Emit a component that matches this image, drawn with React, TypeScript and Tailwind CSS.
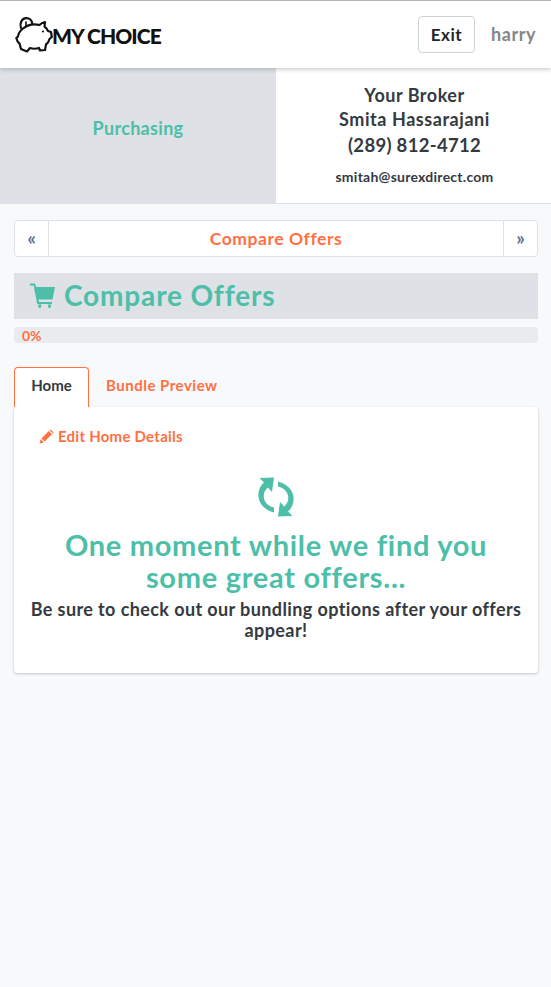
function PiggyLogo() {
  return (
    <svg width="38" height="37" viewBox="0 0 38 37" fill="none" stroke="#111" strokeWidth="2.2" strokeLinejoin="round" strokeLinecap="round">
      <path d="M8 12.5C5 15 3.2 18 3 20.5L1.3 22C2 25 3 26.5 4.5 27.5L6 33L12 35.5L15 32C18 33 21 33 24 32L25 34.5L30 34L31 28.5C33 27 34 25 34.5 23L36.8 21L36 16L33 15C32 13 31 11.5 29.5 10.5L30 6C28 6.5 26 7.5 24.5 9C19 7.5 13 8.5 8 12.5Z" />
      <path d="M6 12C4.3 7 7 2.4 11 2.2C14.5 2 17 4.2 17.3 7.8" />
      <path d="M11 6V9.5" strokeWidth="1.6" />
      <circle cx="28" cy="15.5" r="1.1" fill="#111" stroke="none" />
    </svg>
  );
}

function CartIcon() {
  return (
    <svg width="25" height="26" viewBox="0 0 25 26" fill="currentColor">
      <path d="M0 0.5H5L6 4H25L22.5 16.5H8.5L9 19H22V21H7.2L3.6 2.5H0Z" />
      <path d="M8 21.5H11.5L10.8 25H8.8Z" />
      <path d="M17.8 21.5H21.3L20.5 25H18.5Z" />
    </svg>
  );
}

function PencilIcon() {
  return (
    <svg width="15" height="15" viewBox="0 0 15 15" fill="currentColor">
      <path d="M0.5 14.5L1.6 10.2L4.8 13.4Z" />
      <path d="M2.4 9.4L9.8 2L13 5.2L5.6 12.6Z" />
      <path d="M10.6 1.2L11.6 0.4L14.6 3.4L13.8 4.4Z" />
    </svg>
  );
}

function RefreshIcon() {
  return (
    <svg width="38" height="40" viewBox="0 0 38 40" fill="#4dbfa8">
      <path d="M17 35.5C9 33.5 2.5 28 1.5 20C0.8 14 3.5 8.5 7 5.5L2.5 1L17 0.5L15 15L10.8 10.5C8 13 6.3 16.5 6.8 20.5C7.6 26 12 29.5 17 30.5Z" />
      <path d="M21 4.5C29 6.5 35.5 12 36.5 20C37.2 26 34.5 31.5 31 34.5L35.5 39L21 39.5L23 25L27.2 29.5C30 27 31.7 23.5 31.2 19.5C30.4 14 26 10.5 21 9.5Z" />
    </svg>
  );
}

export default function App() {
  return (
    <div className="min-h-[987px] bg-[#f8f9fb] font-['Lato','Liberation_Sans',sans-serif] text-[#343a40]">
      <header className="relative z-10 flex h-[68px] items-center justify-between border-t border-[#b5b5b5] bg-white pl-[15px] pr-[13px] shadow-[0_2px_4px_rgba(0,0,0,0.18)]">
        <div className="flex items-center">
          <PiggyLogo />
          <span className="-ml-[1px] mt-[1px] text-[21px] leading-none font-black tracking-[-0.95px] text-[#111]">MY CHOICE</span>
        </div>
        <div className="flex items-center">
          <button className="h-[37px] w-[57px] rounded-[4px] border border-[#ced4da] bg-white text-[17px] font-bold tracking-[0.5px] text-[#212529]">Exit</button>
          <span className="ml-4 w-[47px] text-[18px] font-bold tracking-[0.6px] text-[#868686]">harry</span>
        </div>
      </header>

      <section className="flex h-[136px] border-b border-[#dee2e6] bg-white">
        <div className="flex w-[276px] justify-center bg-[#dee1e6] pt-[47px] text-[18px] leading-[26px] font-bold tracking-[0.3px] text-[#4dbfa8]">Purchasing</div>
        <div className="flex flex-1 flex-col items-center pl-[2px] pt-[15px] font-bold">
          <p className="text-[18px] leading-[24px] tracking-[0.5px]">Your Broker</p>
          <p className="text-[18px] leading-[24px] tracking-[0.55px]">Smita Hassarajani</p>
          <p className="mt-[1px] text-[18.5px] leading-[26px] tracking-[0.3px]">(289) 812-4712</p>
          <p className="mt-[9px] text-[14px] leading-[20px] tracking-[0.25px]">smitah@surexdirect.com</p>
        </div>
      </section>

      <main className="pl-[14px] pr-[13px] pt-[16px]">
        <nav className="flex h-[37px] items-center rounded-[4px] border border-[#dee2e6] bg-white">
          <span className="flex h-full w-[34px] items-center justify-center border-r border-[#dee2e6] text-[19px] font-bold text-[#5a7391]">«</span>
          <span className="flex-1 pt-[1px] text-center text-[17.5px] font-bold tracking-[0.55px] text-[#ff7043]">Compare Offers</span>
          <span className="flex h-full w-[34px] items-center justify-center border-l border-[#dee2e6] text-[19px] font-bold text-[#5a7391]">»</span>
        </nav>

        <div className="mt-[16px] flex h-[46px] items-center bg-[#dee1e6] pl-[16px] text-[#4dbfa8]">
          <CartIcon />
          <h1 className="-mt-[2px] ml-[9px] text-[28px] leading-none font-bold tracking-[0.85px]">Compare Offers</h1>
        </div>

        <div className="mt-[8px] flex h-[16px] items-center rounded-[4px] bg-[#e9ecef] pl-[8px] text-[14px] font-bold text-[#ff7043]">0%</div>

        <div className="mt-[24px] flex h-[40px] items-stretch">
          <div className="relative z-10 flex h-[40px] w-[75px] items-center justify-center rounded-t-[4px] border border-b-0 border-[#ff7043] bg-white pb-[4px] text-[15px] font-bold text-[#343a40]">Home</div>
          <div className="ml-[17px] flex items-center pb-[3px] text-[15px] font-bold tracking-[0.5px] text-[#ff7043]">Bundle Preview</div>
        </div>

        <div className="h-[266px] rounded-[4px] bg-white px-[14px] pt-[20px] shadow-[0_1px_3px_rgba(0,0,0,0.22)]">
          <div className="-mt-[1px] flex items-center pl-[11px] text-[15px] leading-[20px] font-bold tracking-[0.25px] text-[#ff7043]">
            <PencilIcon />
            <span className="ml-[4px]">Edit Home Details</span>
          </div>
          <div className="mt-[31px] flex justify-center">
            <RefreshIcon />
          </div>
          <h2 className="mt-[12px] text-center text-[29px] leading-[32px] font-bold tracking-[0.7px] text-[#4dbfa8]">One moment while we find you<br />some great offers...</h2>
          <p className="mt-[6px] -mx-[4px] text-center text-[18px] leading-[21px] font-bold tracking-[0.4px] text-[#343a40]">Be sure to check out our bundling options after your offers appear!</p>
        </div>
      </main>
    </div>
  );
}
